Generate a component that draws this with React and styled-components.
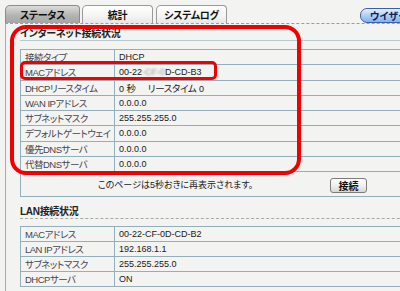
import React from 'react'
import styled, { createGlobalStyle } from 'styled-components'

const GlobalStyle = createGlobalStyle`
  html, body {
    margin: 0;
    padding: 0;
    background: #f3f3f1;
    overflow: hidden;
  }
  body {
    font-family: "Liberation Sans", "Noto Sans CJK JP", sans-serif;
    font-feature-settings: "palt";
    color: #222;
  }
`

const internetRows = [
  { label: '接続タイプ', value: 'DHCP' },
  { label: 'MACアドレス', value: 'mac' },
  { label: 'DHCPリースタイム', value: 'lease' },
  { label: 'WAN IPアドレス', value: '0.0.0.0' },
  { label: 'サブネットマスク', value: '255.255.255.0' },
  { label: 'デフォルトゲートウェイ', value: '0.0.0.0' },
  { label: '優先DNSサーバ', value: '0.0.0.0' },
  { label: '代替DNSサーバ', value: '0.0.0.0' },
]

const lanRows = [
  { label: 'MACアドレス', value: '00-22-CF-0D-CD-B2' },
  { label: 'LAN IPアドレス', value: '192.168.1.1' },
  { label: 'サブネットマスク', value: '255.255.255.0' },
  { label: 'DHCPサーバ', value: 'ON' },
]

const App = () => {
  const renderValue = (v) => {
    if (v === 'mac') {
      return (
        <span>
          00-22<Blurred>-CF-0</Blurred>D-CD-B3
        </span>
      )
    }
    if (v === 'lease') {
      return (
        <span>
          0 <Jp>秒</Jp>
          <LeaseGap />
          <Jp>リースタイム</Jp> 0
        </span>
      )
    }
    return v
  }

  return (
    <Page>
      <GlobalStyle />
      <TabBar>
        <Tab active>ステータス</Tab>
        <Tab>統計</Tab>
        <Tab>システムログ</Tab>
        <WizardButton>ウイザード</WizardButton>
      </TabBar>
      <Panel>
        <SectionTitle>インターネット接続状況</SectionTitle>
        <StatusBox>
          {internetRows.map((r) => (
            <Row key={r.label}>
              <Label>{r.label}</Label>
              <Value>{renderValue(r.value)}</Value>
            </Row>
          ))}
          <MessageRow>
            <Message>このページは5秒おきに再表示されます。</Message>
            <ConnectButton>接続</ConnectButton>
          </MessageRow>
        </StatusBox>

        <SectionTitle lan>LAN接続状況</SectionTitle>
        <LanBox>
          {lanRows.map((r) => (
            <Row key={r.label} lan>
              <Label>{r.label}</Label>
              <Value>{r.value}</Value>
            </Row>
          ))}
        </LanBox>
      </Panel>

      {/* red annotation marks drawn over the page */}
      <Mark style={{ left: 10, top: 25, width: 291, height: 150 }} radius={16} thick={4} />
      <Mark style={{ left: 20, top: 61, width: 197, height: 19 }} radius={5} thick={3} />
    </Page>
  )
}

const Page = styled.div`
  position: relative;
  width: 400px;
  height: 291px;
  overflow: hidden;
`

const TabBar = styled.div`
  display: flex;
  align-items: flex-end;
  gap: 2px;
  height: 23px;
  padding-left: 5px;
`

const Tab = styled.div`
  box-sizing: border-box;
  height: 18px;
  width: ${(p) => (p.active ? '75px' : '71px')};
  margin-right: ${(p) => (p.active ? '0' : '1px')};
  display: flex;
  align-items: center;
  justify-content: center;
  font-size: 10px;
  letter-spacing: -0.3px;
  font-weight: bold;
  color: #111;
  border: 1px solid ${(p) => (p.active ? '#8c8c8a' : '#9a9a98')};
  border-bottom: none;
  border-radius: 5px 4px 0 0;
  background: ${(p) =>
    p.active
      ? 'linear-gradient(#dcdcda, #b4b4b2 55%, #a5a5a3)'
      : 'linear-gradient(#ffffff, #f4f4f2 60%, #e6e6e4)'};
`

const WizardButton = styled.div`
  box-sizing: border-box;
  margin-left: auto;
  margin-right: -20px;
  height: 15px;
  width: 60px;
  padding-left: 9px;
  display: flex;
  align-items: center;
  font-size: 10px;
  font-weight: bold;
  color: #10205a;
  border: 1px solid #3d5ea8;
  border-radius: 7px;
  background: linear-gradient(#e4f0fd, #a9cdf5 55%, #7fb2ea);
`

const Panel = styled.div`
  margin-left: 5px;
  width: 430px;
  height: 300px;
  border-left: 1px solid #aaaaa8;
  border-top: 1px dashed #9c9c9a;
  padding: 3px 0 0 14px;
`

const SectionTitle = styled.div`
  height: 13px;
  margin-top: ${(p) => (p.lan ? '8px' : '0')};
  line-height: 13px;
  font-size: 10px;
  letter-spacing: -0.3px;
  font-weight: bold;
  color: #222;
  border-bottom: 1px ${(p) => (p.lan ? 'dashed #a8a8a6' : 'solid #b9cbd0')};
`

const StatusBox = styled.div`
  margin-top: 8px;
  border: 1px solid #93b0ba;
  border-right: none;
`

const LanBox = styled.div`
  margin-top: 7px;
  border-top: 1px solid #93b0ba;
  border-left: 1px solid #93b0ba;
`

const Row = styled.div`
  box-sizing: border-box;
  display: grid;
  grid-template-columns: 94px 1fr;
  height: ${(p) => (p.lan ? '15px' : '15.25px')};
  border-bottom: 1px solid #93b0ba;
`

const Label = styled.div`
  display: flex;
  align-items: center;
  padding-left: 4px;
  white-space: nowrap;
  overflow: hidden;
  font-size: 9.5px;
  letter-spacing: -0.5px;
  color: #45454f;
  border-right: 1px solid #93b0ba;
`

const Value = styled.div`
  display: flex;
  align-items: center;
  padding-left: 4px;
  white-space: pre;
  font-size: 9px;
  color: #1a1a1a;
`

const Jp = styled.span`
  font-size: 9.5px;
  letter-spacing: -0.3px;
`

const Blurred = styled.span`
  filter: blur(1.2px);
  color: #9a9a9a;
`

const LeaseGap = styled.span`
  display: inline-block;
  width: 12px;
`

const MessageRow = styled.div`
  display: flex;
  align-items: center;
  height: 24px;
`

const Message = styled.div`
  flex: 0 0 309px;
  text-align: center;
  font-size: 9px;
  color: #222;
`

const ConnectButton = styled.div`
  box-sizing: border-box;
  width: 37px;
  height: 15px;
  margin-top: 2px;
  display: flex;
  align-items: center;
  justify-content: center;
  font-size: 10px;
  font-weight: bold;
  color: #111;
  border: 1px solid #7d7d7b;
  border-radius: 3px;
  background: linear-gradient(#ffffff, #ececea 60%, #d6d6d4);
`

const Mark = styled.div`
  position: absolute;
  box-sizing: border-box;
  border: ${(p) => p.thick}px solid #f00000;
  border-radius: ${(p) => p.radius}px;
  pointer-events: none;
`

export default App
